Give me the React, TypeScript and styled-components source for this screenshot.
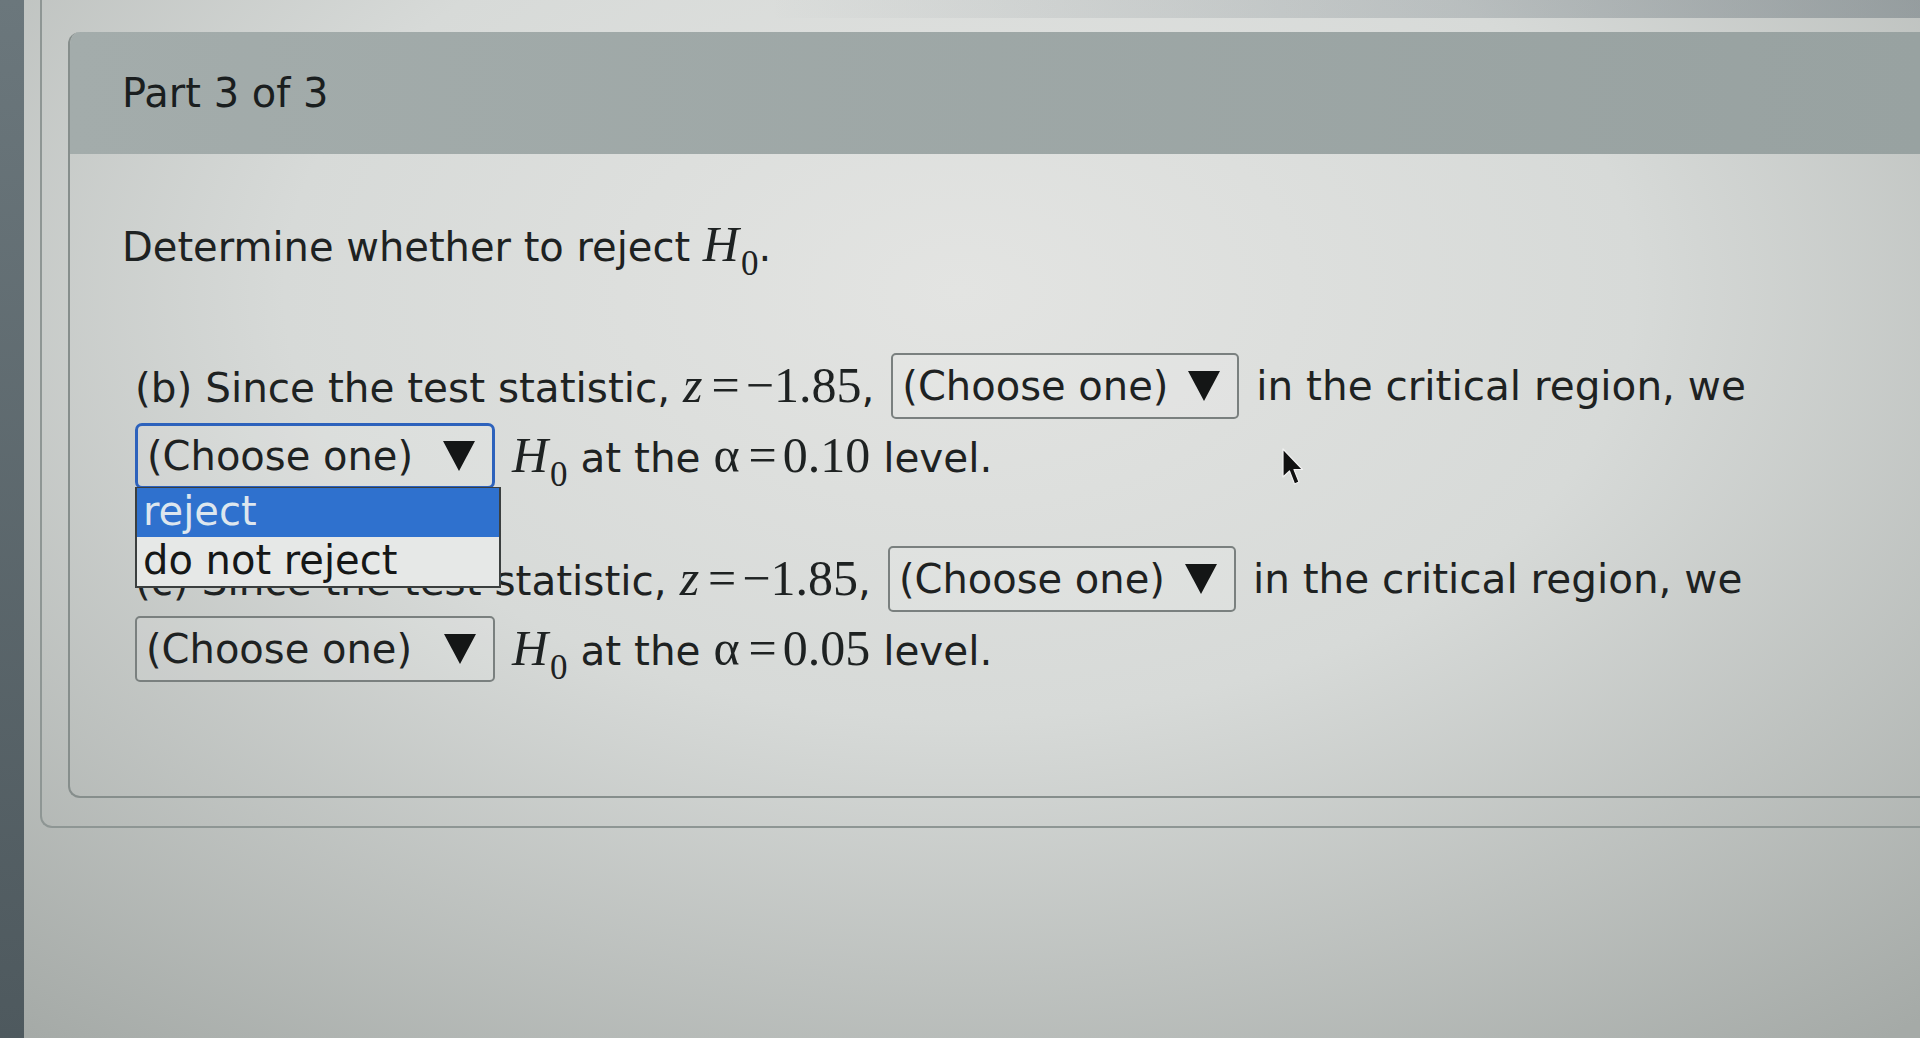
import styled, { createGlobalStyle } from "styled-components";

const GlobalStyle = createGlobalStyle`
  html, body {
    margin: 0;
    padding: 0;
  }
  body {
    width: 1920px;
    height: 1038px;
    overflow: hidden;
    font-family: "DejaVu Sans", Verdana, sans-serif;
    color: #1e2222;
    background: #cfd3d1;
  }
`;

const Screen = styled.div`
  position: relative;
  display: flex;
  height: 1038px;
  background:
    linear-gradient(to right, rgba(0, 0, 0, 0) 40%, rgba(70, 85, 95, 0.35) 100%) top / 100% 18px no-repeat,
    radial-gradient(ellipse 1500px 950px at 50% 28%, #e3e4e2 0%, #d7dad8 45%, #a5aaa7 100%);
`;

const Bezel = styled.div`
  width: 24px;
  flex-shrink: 0;
  background: linear-gradient(#6b777c, #4e595e);
`;

const Desk = styled.div`
  flex: 1;
  padding-left: 16px;
`;

const OuterCard = styled.div`
  border-left: 2px solid #8e9694;
  border-bottom: 2px solid #8e9694;
  border-bottom-left-radius: 12px;
  padding: 32px 0 28px 26px;
`;

const Panel = styled.section`
  border-left: 2px solid #868e8c;
  border-bottom: 2px solid #868e8c;
  border-radius: 12px 0 0 12px;
  overflow: hidden;
`;

const PanelHeader = styled.header`
  display: flex;
  align-items: center;
  height: 122px;
  padding-left: 52px;
  background: linear-gradient(to right, #a3acab, #98a2a1);
  font-size: 40px;
  color: #1a1e1f;
`;

const PanelBody = styled.div`
  padding: 66px 0 112px 52px;
`;

const Prompt = styled.p`
  margin: 0 0 80px;
  font-size: 40px;
  line-height: 48px;
`;

const Question = styled.div`
  margin-left: 13px;
  margin-bottom: 53px;

  &:last-child {
    margin-bottom: 0;
  }
`;

const Line = styled.div`
  display: flex;
  align-items: center;
  gap: 17px;
  height: 70px;
  white-space: nowrap;
  font-size: 40.5px;
  line-height: 48px;
`;

const Math = styled.span`
  font-family: "Liberation Serif", "Times New Roman", serif;
  font-size: 50px;
`;

const Var = styled.i`
  font-style: italic;
`;

const Op = styled.span`
  margin: 0 6px 0 9px;
`;

const Sub = styled.sub`
  font-size: 0.7em;
  position: relative;
  top: 0.4em;
  vertical-align: baseline;
  line-height: 0;
  margin-left: 2px;
`;

const Select = styled.span<{ $focused?: boolean; $width: number }>`
  position: relative;
  display: inline-flex;
  align-items: center;
  justify-content: space-between;
  box-sizing: border-box;
  flex-shrink: 0;
  width: ${(p) => p.$width}px;
  height: 66px;
  padding: 0 17px 0 9px;
  border: ${(p) => (p.$focused ? "3px solid #2d62bc" : "2px solid #7a807f")};
  border-radius: ${(p) => (p.$focused ? "7px" : "5px")};
  background: rgba(255, 255, 255, 0.12);
  font-size: 40px;
`;

const Caret = styled.span`
  width: 0;
  height: 0;
  border-left: 16px solid transparent;
  border-right: 16px solid transparent;
  border-top: 30px solid #141616;
`;

const Listbox = styled.ul`
  position: absolute;
  top: calc(100% + 1px);
  left: -3px;
  z-index: 2;
  box-sizing: border-box;
  width: 366px;
  margin: 0;
  padding: 0;
  list-style: none;
  border: 2px solid #3b3f3f;
  border-top-width: 1px;
  background: #e6e8e7;
`;

const Option = styled.li<{ $active?: boolean }>`
  height: 49px;
  line-height: 46px;
  padding-left: 6px;
  font-size: 40px;
  background: ${(p) => (p.$active ? "#2f71ce" : "transparent")};
  color: ${(p) => (p.$active ? "#dde6ee" : "#151717")};
`;

const Pointer = styled.svg`
  position: absolute;
  left: 1282px;
  top: 448px;
  width: 22px;
  height: 38px;
`;

function ChooseOne({ open, width }: { open?: boolean; width: number }) {
  return (
    <Select $focused={open} $width={width}>
      (Choose one)
      <Caret />
      {open && (
        <Listbox>
          <Option $active>reject</Option>
          <Option>do not reject</Option>
        </Listbox>
      )}
    </Select>
  );
}

function H0() {
  return (
    <Math>
      <Var>H</Var>
      <Sub>0</Sub>
    </Math>
  );
}

interface PartProps {
  label: string;
  alpha: string;
  open?: boolean;
}

function Part({ label, alpha, open }: PartProps) {
  return (
    <Question>
      <Line>
        <span>
          ({label}) Since the test statistic,{" "}
          <Math>
            <Var>z</Var>
            <Op>=</Op>−1.85
          </Math>
          ,
        </span>
        <ChooseOne width={348} />
        <span>in the critical region, we</span>
      </Line>
      <Line>
        <ChooseOne open={open} width={360} />
        <span>
          <H0 /> at the{" "}
          <Math>
            α<Op>=</Op>
            {alpha}
          </Math>{" "}
          level.
        </span>
      </Line>
    </Question>
  );
}

export default function App() {
  return (
    <>
      <GlobalStyle />
      <Screen>
        <Bezel />
        <Desk>
          <OuterCard>
            <Panel>
              <PanelHeader>Part 3 of 3</PanelHeader>
              <PanelBody>
                <Prompt>
                  Determine whether to reject <H0 />.
                </Prompt>
                <Part label="b" alpha="0.10" open />
                <Part label="c" alpha="0.05" />
              </PanelBody>
            </Panel>
          </OuterCard>
        </Desk>
        <Pointer viewBox="0 0 22 38">
          <path
            d="M1 1 L1 29 L7.5 23 L12.5 36 L17 34 L12 21.5 L20.5 21.5 Z"
            fill="#111"
            stroke="#f2f2f2"
            strokeWidth="1.2"
            strokeLinejoin="round"
          />
        </Pointer>
      </Screen>
    </>
  );
}
